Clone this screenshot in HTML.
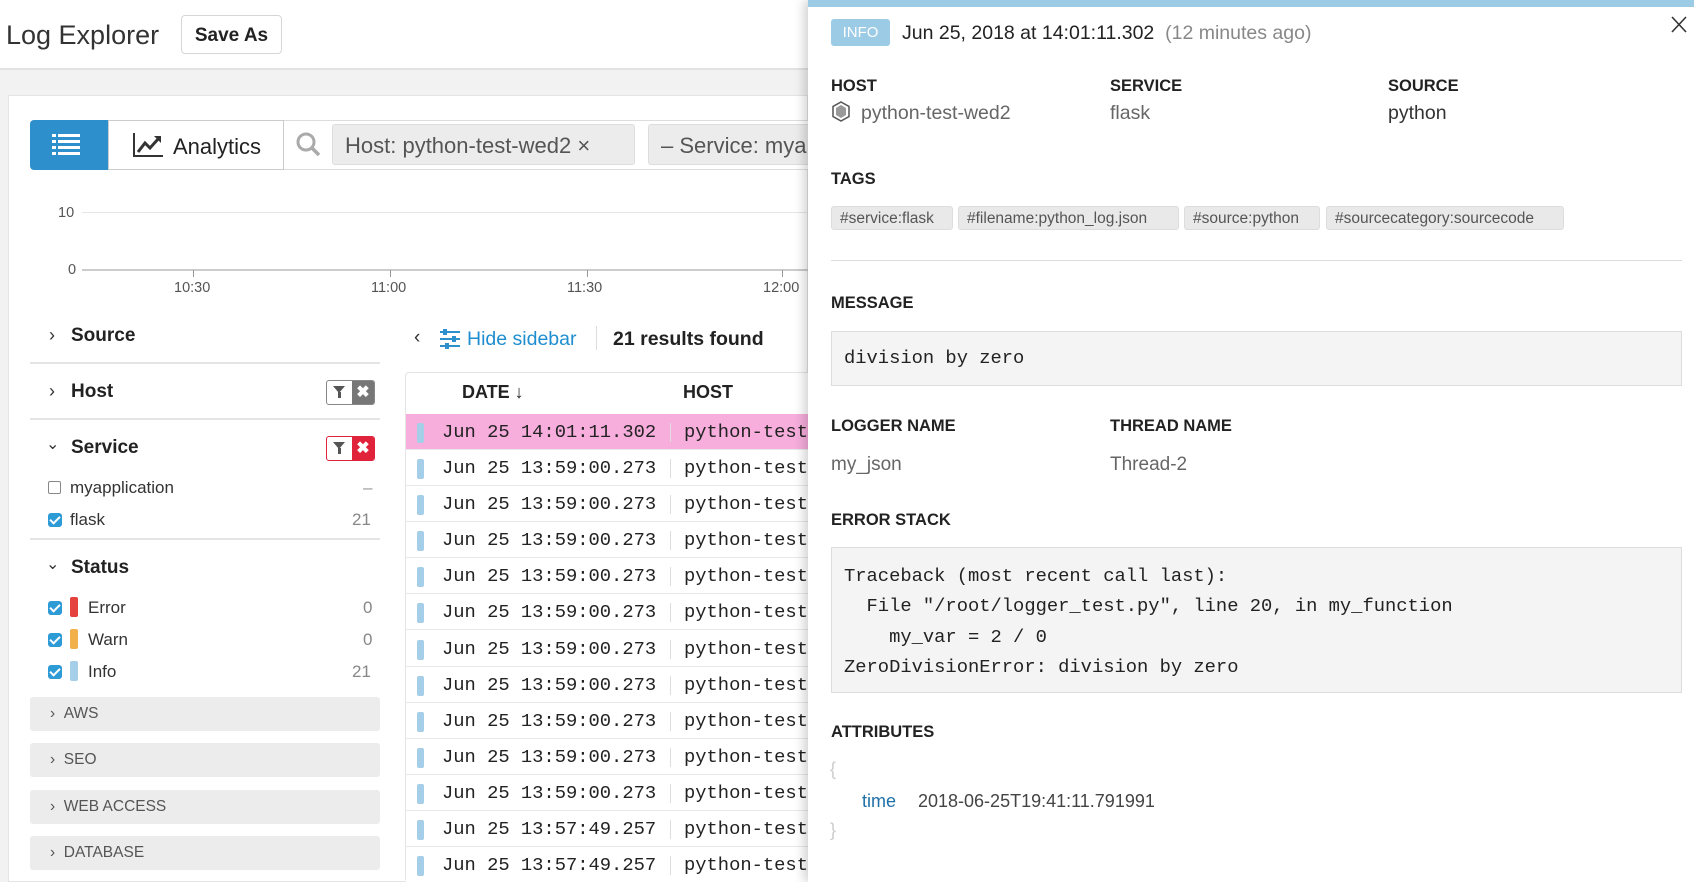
<!DOCTYPE html>
<html style="overflow:hidden"><head><meta charset="utf-8">
<style>
*{box-sizing:border-box;margin:0;padding:0}
html,body{width:1694px;height:882px;overflow:hidden}
body{position:relative;background:#f2f2f2;font-family:"Liberation Sans",sans-serif;color:#222}
#w{position:absolute;left:0;top:0;width:1694px;height:882px;overflow:hidden}
.a{position:absolute;white-space:nowrap}
.mono{font-family:"Liberation Mono",monospace}
.lbl{font-weight:bold;font-size:16.5px;color:#222}
.sep{position:absolute;height:2px;background:#e4e4e4}
.grp{position:absolute;left:30px;width:350px;height:34px;background:#ececec;border-radius:3px;font-size:15.5px;color:#555}
.cb{position:absolute;width:14px;height:14px;border-radius:3px;background:#2d9bd6}
.cb:after{content:"";position:absolute;left:4px;top:1px;width:4px;height:8px;border:solid #fff;border-width:0 2px 2px 0;transform:rotate(45deg)}
.row{position:absolute;left:406px;width:410px;height:36px;border-bottom:1px solid #e8e8e8;background:#fff;white-space:nowrap;overflow:hidden}
.row .bar{position:absolute;left:11px;top:9px;width:7px;height:20px;background:#a5cfe8;border-radius:2px}
.row .d{position:absolute;left:36px;top:7px;font-size:18.8px;color:#222;white-space:nowrap}
.row .s{position:absolute;left:264px;top:9px;width:1px;height:19px;background:#ddd}
.row .h{position:absolute;left:278px;top:7px;font-size:18.8px;color:#222;white-space:nowrap}
.tag{position:absolute;top:206px;height:24px;background:#e9e9e9;border:1px solid #ddd;border-radius:3px;font-size:15.5px;color:#555;padding:3px 8px 0;white-space:nowrap}
</style></head><body><div id="w">
<!-- header -->
<div class="a" style="left:0;top:0;width:808px;height:70px;background:#fff;border-bottom:2px solid #e2e2e2"></div>
<div class="a" style="left:6px;top:20px;font-size:27px;color:#333">Log Explorer</div>
<div class="a" style="left:181px;top:15px;width:101px;height:39px;border:1px solid #d6d6d6;border-radius:4px;background:#fff;font-size:19px;font-weight:bold;text-align:center;line-height:39px;color:#222">Save As</div>
<!-- main card -->
<div class="a" style="left:8px;top:95px;width:800px;height:787px;background:#fff;border:1px solid #e4e4e4"></div>
<div class="a" style="left:30px;top:120px;width:78px;height:50px;background:#2d8fcb;border-radius:4px 0 0 4px"></div>
<svg class="a" style="left:52px;top:133px" width="30" height="24" viewBox="0 0 30 24"><g fill="#fff"><rect x="0" y="1" width="4" height="3"/><rect x="6" y="1" width="22" height="3"/><rect x="0" y="7" width="4" height="3"/><rect x="6" y="7" width="22" height="3"/><rect x="0" y="13" width="4" height="3"/><rect x="6" y="13" width="22" height="3"/><rect x="0" y="19" width="4" height="3"/><rect x="6" y="19" width="22" height="3"/></g></svg>
<div class="a" style="left:108px;top:120px;width:176px;height:50px;border:1px solid #ccc;background:#fff"></div>
<svg class="a" style="left:132px;top:132px" width="32" height="26" viewBox="0 0 32 26"><path d="M2 1V24H31" stroke="#333" stroke-width="2" fill="none"/><path d="M6 20L13 11L18 16L27 6" stroke="#333" stroke-width="3" fill="none"/><path d="M22 4H29V11Z" fill="#333"/></svg>
<div class="a" style="left:173px;top:134px;font-size:22px;color:#222">Analytics</div>
<div class="a" style="left:284px;top:120px;width:524px;height:50px;border-top:1px solid #ddd;border-bottom:1px solid #ddd;background:#fff"></div>
<svg class="a" style="left:296px;top:132px" width="26" height="26" viewBox="0 0 26 26"><circle cx="10" cy="10" r="8" stroke="#aaa" stroke-width="3" fill="none"/><path d="M16 16L23 23" stroke="#aaa" stroke-width="3.5"/></svg>
<div class="a" style="left:332px;top:124px;width:303px;height:41px;background:#ececec;border:1px solid #ddd;border-radius:3px;font-size:22px;color:#555;padding:8px 0 0 12px">Host: python-test-wed2 ×</div>
<div class="a" style="left:648px;top:124px;width:200px;height:41px;background:#ececec;border:1px solid #ddd;border-radius:3px;font-size:22px;color:#555;padding:8px 0 0 12px">– Service: myapplication</div>
<!-- chart -->
<div class="a" style="left:58px;top:205px;font-size:14.5px;color:#555">10</div>
<div class="a" style="left:68px;top:262px;font-size:14.5px;color:#555">0</div>
<div class="a" style="left:82px;top:212px;width:726px;height:1px;background:#e6e6e6"></div>
<div class="a" style="left:82px;top:269px;width:726px;height:2px;background:#ccc"></div>
<div class="a" style="left:193px;top:270px;width:1px;height:7px;background:#999"></div>
<div class="a" style="left:390px;top:270px;width:1px;height:7px;background:#999"></div>
<div class="a" style="left:587px;top:270px;width:1px;height:7px;background:#999"></div>
<div class="a" style="left:782px;top:270px;width:1px;height:7px;background:#999"></div>
<div class="a" style="left:174px;top:280px;font-size:14.5px;color:#555">10:30</div>
<div class="a" style="left:371px;top:280px;font-size:14.5px;color:#555">11:00</div>
<div class="a" style="left:567px;top:280px;font-size:14.5px;color:#555">11:30</div>
<div class="a" style="left:763px;top:280px;font-size:14.5px;color:#555">12:00</div>
<!-- sidebar -->
<div class="a" style="left:49px;top:325px;font-size:18px;color:#333">›</div>
<div class="a" style="left:71px;top:325px;font-size:19px;font-weight:bold;color:#222">Source</div>
<div class="sep" style="left:30px;top:362px;width:350px"></div>
<div class="a" style="left:49px;top:381px;font-size:18px;color:#333">›</div>
<div class="a" style="left:71px;top:381px;font-size:19px;font-weight:bold;color:#222">Host</div>
<div class="a" style="left:326px;top:380px;width:49px;height:25px;border:1px solid #888;border-radius:3px;background:#fff;overflow:hidden"><div style="position:absolute;right:0;top:0;width:22px;height:25px;background:#777;color:#fff;font-size:16px;font-weight:bold;text-align:center;line-height:23px">✖</div><div style="position:absolute;left:6px;top:5px;width:0;height:0;border-left:6px solid transparent;border-right:6px solid transparent;border-top:7px solid #555"></div><div style="position:absolute;left:11px;top:11px;width:3px;height:6px;background:#555"></div></div>
<div class="sep" style="left:30px;top:418px;width:350px"></div>
<div class="a" style="left:46px;top:434px;font-size:16px;color:#333">⌄</div>
<div class="a" style="left:71px;top:437px;font-size:19px;font-weight:bold;color:#222">Service</div>
<div class="a" style="left:326px;top:436px;width:49px;height:25px;border:1px solid #e0223a;border-radius:3px;background:#fff;overflow:hidden"><div style="position:absolute;right:0;top:0;width:22px;height:25px;background:#e0223a;color:#fff;font-size:16px;font-weight:bold;text-align:center;line-height:23px">✖</div><div style="position:absolute;left:6px;top:5px;width:0;height:0;border-left:6px solid transparent;border-right:6px solid transparent;border-top:7px solid #555"></div><div style="position:absolute;left:11px;top:11px;width:3px;height:6px;background:#555"></div></div>
<div class="a" style="left:48px;top:481px;width:13px;height:13px;border:1px solid #888;border-radius:2px;background:#fff"></div>
<div class="a" style="left:70px;top:478px;font-size:17px;color:#333">myapplication</div>
<div class="a" style="left:363px;top:478px;font-size:17px;color:#999">–</div>
<div class="cb" style="left:48px;top:513px"></div>
<div class="a" style="left:70px;top:510px;font-size:17px;color:#333">flask</div>
<div class="a" style="left:352px;top:510px;font-size:17px;color:#888">21</div>
<div class="sep" style="left:30px;top:538px;width:350px"></div>
<div class="a" style="left:46px;top:554px;font-size:16px;color:#333">⌄</div>
<div class="a" style="left:71px;top:557px;font-size:19px;font-weight:bold;color:#222">Status</div>
<div class="cb" style="left:48px;top:601px"></div><div class="a" style="left:70px;top:597px;width:8px;height:20px;background:#e5413f;border-radius:2px"></div>
<div class="a" style="left:88px;top:598px;font-size:17px;color:#333">Error</div><div class="a" style="left:363px;top:598px;font-size:17px;color:#888">0</div>
<div class="cb" style="left:48px;top:633px"></div><div class="a" style="left:70px;top:629px;width:8px;height:20px;background:#f2b04a;border-radius:2px"></div>
<div class="a" style="left:88px;top:630px;font-size:17px;color:#333">Warn</div><div class="a" style="left:363px;top:630px;font-size:17px;color:#888">0</div>
<div class="cb" style="left:48px;top:665px"></div><div class="a" style="left:70px;top:661px;width:8px;height:20px;background:#a5cfe8;border-radius:2px"></div>
<div class="a" style="left:88px;top:662px;font-size:17px;color:#333">Info</div><div class="a" style="left:352px;top:662px;font-size:17px;color:#888">21</div>
<div class="grp" style="top:697px"><span class="a" style="left:20px;top:8px">›&nbsp;&nbsp;AWS</span></div>
<div class="grp" style="top:743px"><span class="a" style="left:20px;top:8px">›&nbsp;&nbsp;SEO</span></div>
<div class="grp" style="top:790px"><span class="a" style="left:20px;top:8px">›&nbsp;&nbsp;WEB ACCESS</span></div>
<div class="grp" style="top:836px"><span class="a" style="left:20px;top:8px">›&nbsp;&nbsp;DATABASE</span></div>
<!-- results bar -->
<div class="a" style="left:414px;top:327px;font-size:19px;color:#333">‹</div>
<svg class="a" style="left:439px;top:329px" width="22" height="20" viewBox="0 0 22 20"><g stroke="#2d8fcb" stroke-width="2"><path d="M1 3H21M1 10H21M1 17H21"/></g><g fill="#2d8fcb"><rect x="4" y="0" width="4" height="6"/><rect x="13" y="7" width="4" height="6"/><rect x="6" y="14" width="4" height="6"/></g></svg>
<div class="a" style="left:467px;top:328px;font-size:19.5px;color:#1f8ed0">Hide sidebar</div>
<div class="a" style="left:596px;top:326px;width:1px;height:24px;background:#ddd"></div>
<div class="a" style="left:613px;top:328px;font-size:19.5px;font-weight:bold;color:#222">21 results found</div>
<!-- table -->
<div class="a" style="left:405px;top:372px;width:410px;height:510px;background:#fff;border:1px solid #e4e4e4;border-radius:4px"></div>
<div class="a" style="left:462px;top:382px;font-size:18px;font-weight:bold;color:#222">DATE ↓</div>
<div class="a" style="left:683px;top:382px;font-size:18px;font-weight:bold;color:#222">HOST</div>
<div class="row mono" style="top:414px;background:#f7aedd"><div class="bar"></div><div class="d">Jun 25 14:01:11.302</div><div class="s"></div><div class="h">python-test-wed2</div></div>
<div class="row mono" style="top:450px"><div class="bar"></div><div class="d">Jun 25 13:59:00.273</div><div class="s"></div><div class="h">python-test-wed2</div></div>
<div class="row mono" style="top:486px"><div class="bar"></div><div class="d">Jun 25 13:59:00.273</div><div class="s"></div><div class="h">python-test-wed2</div></div>
<div class="row mono" style="top:522px"><div class="bar"></div><div class="d">Jun 25 13:59:00.273</div><div class="s"></div><div class="h">python-test-wed2</div></div>
<div class="row mono" style="top:558px"><div class="bar"></div><div class="d">Jun 25 13:59:00.273</div><div class="s"></div><div class="h">python-test-wed2</div></div>
<div class="row mono" style="top:594px"><div class="bar"></div><div class="d">Jun 25 13:59:00.273</div><div class="s"></div><div class="h">python-test-wed2</div></div>
<div class="row mono" style="top:631px"><div class="bar"></div><div class="d">Jun 25 13:59:00.273</div><div class="s"></div><div class="h">python-test-wed2</div></div>
<div class="row mono" style="top:667px"><div class="bar"></div><div class="d">Jun 25 13:59:00.273</div><div class="s"></div><div class="h">python-test-wed2</div></div>
<div class="row mono" style="top:703px"><div class="bar"></div><div class="d">Jun 25 13:59:00.273</div><div class="s"></div><div class="h">python-test-wed2</div></div>
<div class="row mono" style="top:739px"><div class="bar"></div><div class="d">Jun 25 13:59:00.273</div><div class="s"></div><div class="h">python-test-wed2</div></div>
<div class="row mono" style="top:775px"><div class="bar"></div><div class="d">Jun 25 13:59:00.273</div><div class="s"></div><div class="h">python-test-wed2</div></div>
<div class="row mono" style="top:811px"><div class="bar"></div><div class="d">Jun 25 13:57:49.257</div><div class="s"></div><div class="h">python-test-wed2</div></div>
<div class="row mono" style="top:847px"><div class="bar"></div><div class="d">Jun 25 13:57:49.257</div><div class="s"></div><div class="h">python-test-wed2</div></div>
<!-- detail panel -->
<div class="a" style="left:808px;top:0;width:886px;height:882px;background:#fff;box-shadow:-4px 0 10px rgba(0,0,0,0.18)"></div>
<div class="a" style="left:808px;top:0;width:886px;height:7px;background:#9ccbe6"></div>
<div class="a" style="left:831px;top:19px;width:59px;height:27px;background:#9ccbe6;border-radius:3px;color:#fff;font-size:15px;text-align:center;line-height:27px">INFO</div>
<div class="a" style="left:902px;top:22px;font-size:19.5px;color:#222">Jun 25, 2018 at 14:01:11.302 <span style="color:#888">&nbsp;(12 minutes ago)</span></div>
<svg class="a" style="left:1671px;top:16px" width="16" height="17" viewBox="0 0 16 17"><path d="M1 1L15 16M15 1L1 16" stroke="#333" stroke-width="1.6"/></svg>
<div class="a lbl" style="left:831px;top:77px">HOST</div>
<div class="a lbl" style="left:1110px;top:77px">SERVICE</div>
<div class="a lbl" style="left:1388px;top:77px">SOURCE</div>
<svg class="a" style="left:832px;top:101px" width="18" height="21" viewBox="0 0 18 21"><path d="M9 1L17 5.5V15.5L9 20L1 15.5V5.5Z" fill="#fff" stroke="#555" stroke-width="1.5"/><path d="M9 4L14 7V14L9 17L4 14V7Z" fill="#999"/></svg>
<div class="a" style="left:861px;top:102px;font-size:19.5px;color:#666">python-test-wed2</div>
<div class="a" style="left:1110px;top:102px;font-size:19.5px;color:#666">flask</div>
<div class="a" style="left:1388px;top:102px;font-size:19.5px;color:#333">python</div>
<div class="a lbl" style="left:831px;top:170px">TAGS</div>
<div class="tag" style="left:831px;width:122px">#service:flask</div>
<div class="tag" style="left:958px;width:221px">#filename:python_log.json</div>
<div class="tag" style="left:1184px;width:136px">#source:python</div>
<div class="tag" style="left:1326px;width:238px">#sourcecategory:sourcecode</div>
<div class="a" style="left:831px;top:260px;width:851px;height:1px;background:#ddd"></div>
<div class="a lbl" style="left:831px;top:294px">MESSAGE</div>
<div class="a" style="left:831px;top:331px;width:851px;height:55px;background:#f4f4f4;border:1px solid #ddd"></div>
<div class="a mono" style="left:844px;top:347px;font-size:18.8px;color:#222">division by zero</div>
<div class="a lbl" style="left:831px;top:417px">LOGGER NAME</div>
<div class="a lbl" style="left:1110px;top:417px">THREAD NAME</div>
<div class="a" style="left:831px;top:454px;font-size:19px;color:#666">my_json</div>
<div class="a" style="left:1110px;top:454px;font-size:19px;color:#666">Thread-2</div>
<div class="a lbl" style="left:831px;top:511px">ERROR STACK</div>
<div class="a" style="left:831px;top:547px;width:851px;height:146px;background:#f4f4f4;border:1px solid #ddd"></div>
<div class="a mono" style="left:844px;top:561px;font-size:18.8px;color:#222;line-height:30.3px;white-space:pre">Traceback (most recent call last):
  File "/root/logger_test.py", line 20, in my_function
    my_var = 2 / 0
ZeroDivisionError: division by zero</div>
<div class="a lbl" style="left:831px;top:723px">ATTRIBUTES</div>
<div class="a" style="left:830px;top:759px;font-size:18px;color:#ccc">{</div>
<div class="a" style="left:862px;top:791px;font-size:18px;color:#1f6fa8">time</div>
<div class="a" style="left:918px;top:791px;font-size:18px;color:#444">2018-06-25T19:41:11.791991</div>
<div class="a" style="left:830px;top:820px;font-size:18px;color:#ccc">}</div>
</div></body></html>
